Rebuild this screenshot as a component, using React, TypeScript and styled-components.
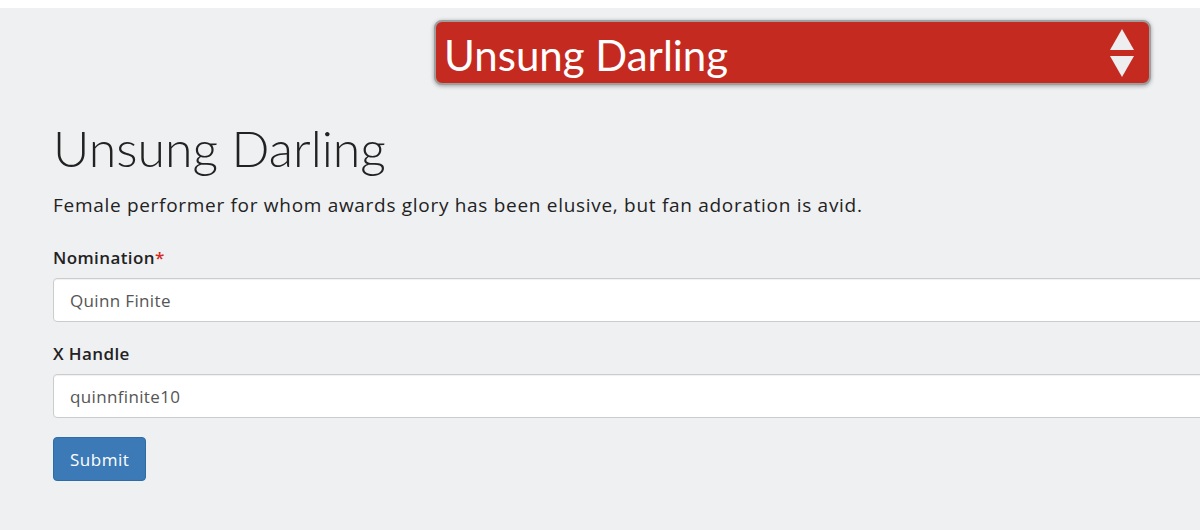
import React, { useState } from "react";
import styled, { createGlobalStyle } from "styled-components";

const GlobalStyle = createGlobalStyle`
  html, body {
    margin: 0;
    padding: 0;
    background: #ffffff;
    overflow: hidden;
  }
  body {
    font-family: "Open Sans", "Lato", sans-serif;
    color: #222;
  }
`;

const Page = styled.div`
  margin-top: 8px;
  height: 522px;
  background: #eff0f2;
  padding: 12px 0 0 53px;
  box-sizing: border-box;
`;

const TopBar = styled.div`
  display: flex;
  padding-left: 381px;
`;

const CategorySelect = styled.div`
  width: 717px;
  height: 65px;
  box-sizing: border-box;
  display: flex;
  align-items: center;
  justify-content: space-between;
  padding: 4px 14px 0 8px;
  background: #c52a21;
  border: 2px solid #9e9e9e;
  border-radius: 8px;
  box-shadow: 0 1px 4px rgba(0, 0, 0, 0.35);
  color: #fff;
  font-family: "Lato", sans-serif;
  font-size: 42px;
  cursor: pointer;
`;

const Arrows = styled.svg`
  display: block;
  margin-top: -4px;
`;

const Title = styled.h1`
  margin: 35px 0 0;
  font-family: "Lato", sans-serif;
  font-size: 50px;
  font-weight: 300;
  line-height: 56px;
  color: #222;
`;

const Description = styled.p`
  margin: 16px 0 0;
  font-size: 19px;
  letter-spacing: 0.7px;
  line-height: 26px;
`;

const Form = styled.form`
  margin-top: 29px;
  width: 1180px;
`;

const Field = styled.div`
  margin-bottom: 21px;
`;

const Label = styled.label`
  display: block;
  font-size: 17px;
  font-weight: 600;
  letter-spacing: 0.4px;
  line-height: 22px;
  margin-bottom: 9px;
`;

const Required = styled.span`
  color: #d62a22;
`;

const Input = styled.input`
  display: block;
  width: 100%;
  height: 44px;
  box-sizing: border-box;
  padding: 0 16px;
  font-family: inherit;
  font-size: 17px;
  letter-spacing: 0.35px;
  color: #555;
  background: #fff;
  border: 1px solid #cccccc;
  border-radius: 4px;
  box-shadow: inset 0 1px 1px rgba(0, 0, 0, 0.06);
  outline: none;
`;

const SubmitButton = styled.button`
  margin-top: -2px;
  height: 44px;
  padding: 0 16px;
  font-family: inherit;
  font-size: 17px;
  letter-spacing: 0.5px;
  color: #fff;
  background: #3c7ab7;
  border: 1px solid #2e6da4;
  border-radius: 4px;
  cursor: pointer;
`;

export default function App() {
  const [name, setName] = useState("Quinn Finite");
  const [handle, setHandle] = useState("quinnfinite10");

  return (
    <>
      <GlobalStyle />
      <Page>
        <TopBar>
          <CategorySelect>
            <span>Unsung Darling</span>
            <Arrows width="26" height="50" viewBox="0 0 26 50">
              <polygon points="13,1 25,22 1,22" fill="#eeeef0" />
              <polygon points="1,28 25,28 13,49" fill="#eeeef0" />
            </Arrows>
          </CategorySelect>
        </TopBar>
        <Title>Unsung Darling</Title>
        <Description>
          Female performer for whom awards glory has been elusive, but fan
          adoration is avid.
        </Description>
        <Form onSubmit={(e) => e.preventDefault()}>
          <Field>
            <Label>
              Nomination<Required>*</Required>
            </Label>
            <Input value={name} onChange={(e) => setName(e.target.value)} />
          </Field>
          <Field>
            <Label>X Handle</Label>
            <Input value={handle} onChange={(e) => setHandle(e.target.value)} />
          </Field>
          <SubmitButton type="submit">Submit</SubmitButton>
        </Form>
      </Page>
    </>
  );
}
